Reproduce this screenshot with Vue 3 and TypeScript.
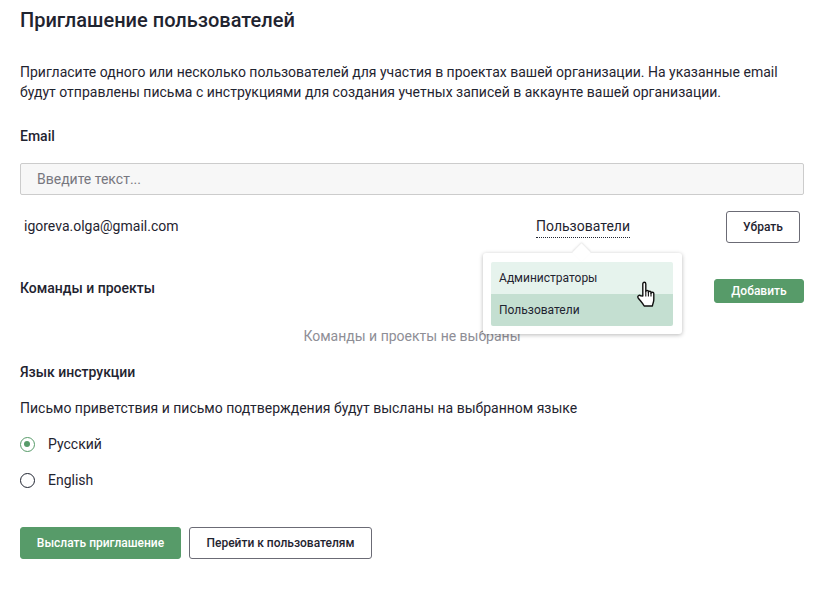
<script setup lang="ts">
const title = 'Приглашение пользователей'
</script>

<template>
  <div class="page">
    <h1 class="title">{{ title }}</h1>
    <p class="intro">Пригласите одного или несколько пользователей для участия в проектах вашей организации. На указанные email будут отправлены письма с инструкциями для создания учетных записей в аккаунте вашей организации.</p>
    <div class="label email-label">Email</div>
    <input class="input" placeholder="Введите текст..." />
    <div class="user-row">
      <span class="user-email">igoreva.olga@gmail.com</span>
      <div class="role-wrap">
        <span class="role">Пользователи</span>
        <div class="menu">
          <div class="item hover">Администраторы</div>
          <div class="item active">Пользователи</div>
          <svg class="cursor" width="19" height="26" viewBox="0 0 19 26"><path d="M5.800 15V2.900C5.800 .7 8.800 .7 8.800 2.900V10.500c0-1.500 2.600-1.500 2.600 0v.8c0-1.500 2.600-1.500 2.600 0v1c0-1.400 2.800-1.400 2.800 .2V18.500c0 2.800-1 3.500-1.400 6.500H7.200C6 22.500 3.500 20 1.200 17c-1.200-1.800 1-3.600 2.600-2.100z" fill="#fff" stroke="#111" stroke-width="1.400" stroke-linejoin="round"/><path d="M8.800 10.500v5M11.400 11v4.500M14 12v3.500" stroke="#111" stroke-width="1.100" fill="none"/></svg>
        </div>
      </div>
      <button class="btn outline remove">Убрать</button>
    </div>
    <div class="teams-row">
      <div class="label teams-label">Команды и проекты</div>
      <button class="btn primary add">Добавить</button>
    </div>
    <div class="empty">Команды и проекты не выбраны</div>
    <div class="label lang-label">Язык инструкции</div>
    <p class="lang-note">Письмо приветствия и письмо подтверждения будут высланы на выбранном языке</p>
    <div class="radio-row"><span class="radio checked"></span>Русский</div>
    <div class="radio-row"><span class="radio"></span>English</div>
    <div class="actions">
      <button class="btn primary send">Выслать приглашение</button>
      <button class="btn outline go">Перейти к пользователям</button>
    </div>
  </div>
</template>

<style>
html, body { margin: 0; background: #fff; }
</style>

<style scoped>
.page { width: 784px; padding: 8px 34px 0 20px; font-family: Roboto, sans-serif; color: #1f2430; font-size: 14px; box-sizing: content-box; }
.title { margin: 0; font-size: 20px; font-weight: 500; line-height: 24px; }
.intro { margin: 30px 0 0; line-height: 20px; font-size: 14px; }
.label { font-weight: 500; font-size: 14px; line-height: 20px; }
.email-label { margin-top: 24px; }
.input { display: block; width: 100%; height: 32px; margin-top: 17px; box-sizing: border-box; border: 1px solid #ccc; background: #f7f7f7; padding: 0 16px; font: 14px Roboto, sans-serif; border-radius: 2px; outline: none; }
.input::placeholder { color: #77777f; }
.user-row { display: flex; align-items: center; height: 32px; margin-top: 16px; padding: 0 4px; }
.user-email { flex: 1; position: relative; top: -1px; }
.role-wrap { position: relative; margin-right: 96px; top: -1px; }
.role { border-bottom: 1px dotted #1f2430; padding-bottom: 3px; }
.menu { position: absolute; left: -53px; top: 35px; width: 199px; height: 81px; box-sizing: border-box; padding: 9px 9px 9px 8px; background: #fff; border-radius: 3px; box-shadow: 0 1px 4px rgba(0,0,0,.28); font-size: 12px; z-index: 2; }
.menu::before { content: ''; position: absolute; left: 92px; top: -7px; width: 13px; height: 13px; background: #fff; transform: rotate(45deg); box-shadow: -1px -1px 2px rgba(0,0,0,.1); }
.item { position: relative; height: 32px; line-height: 32px; padding-left: 8px; }
.hover { background: #e6f3ed; border-radius: 2px 2px 0 0; }
.active { background: #c4dfd1; border-radius: 0 0 2px 2px; }
.cursor { position: absolute; left: 154px; top: 28px; z-index: 3; }
.btn { font: 500 12px Roboto, sans-serif; border-radius: 3px; box-sizing: border-box; cursor: pointer; }
.outline { background: #fff; border: 1px solid #6b6b75; color: #1f2430; }
.primary { background: #579b69; border: 1px solid #579b69; color: #fff; }
.remove { width: 74px; height: 32px; }
.teams-row { display: flex; justify-content: space-between; align-items: flex-start; height: 24px; margin-top: 36px; }
.teams-label { margin-top: -1px; }
.add { width: 90px; height: 24px; }
.empty { text-align: center; color: #8e8e96; margin-top: 23px; line-height: 20px; }
.lang-label { margin-top: 16px; }
.lang-note { margin: 16px 0 0; line-height: 20px; }
.radio-row { display: flex; align-items: center; gap: 13px; height: 20px; margin-top: 16px; }
.radio { position: relative; width: 15px; height: 15px; box-sizing: border-box; border: 1.500px solid #1f2430; border-radius: 50%; }
.radio.checked { border: 1.500px solid #579b69; }
.radio.checked::after { content: ''; position: absolute; left: 3px; top: 3px; width: 6px; height: 6px; border-radius: 50%; background: #579b69; }
.actions { display: flex; gap: 8px; margin-top: 37px; }
.send { width: 161px; height: 32px; }
.go { width: 183px; height: 32px; }
</style>
